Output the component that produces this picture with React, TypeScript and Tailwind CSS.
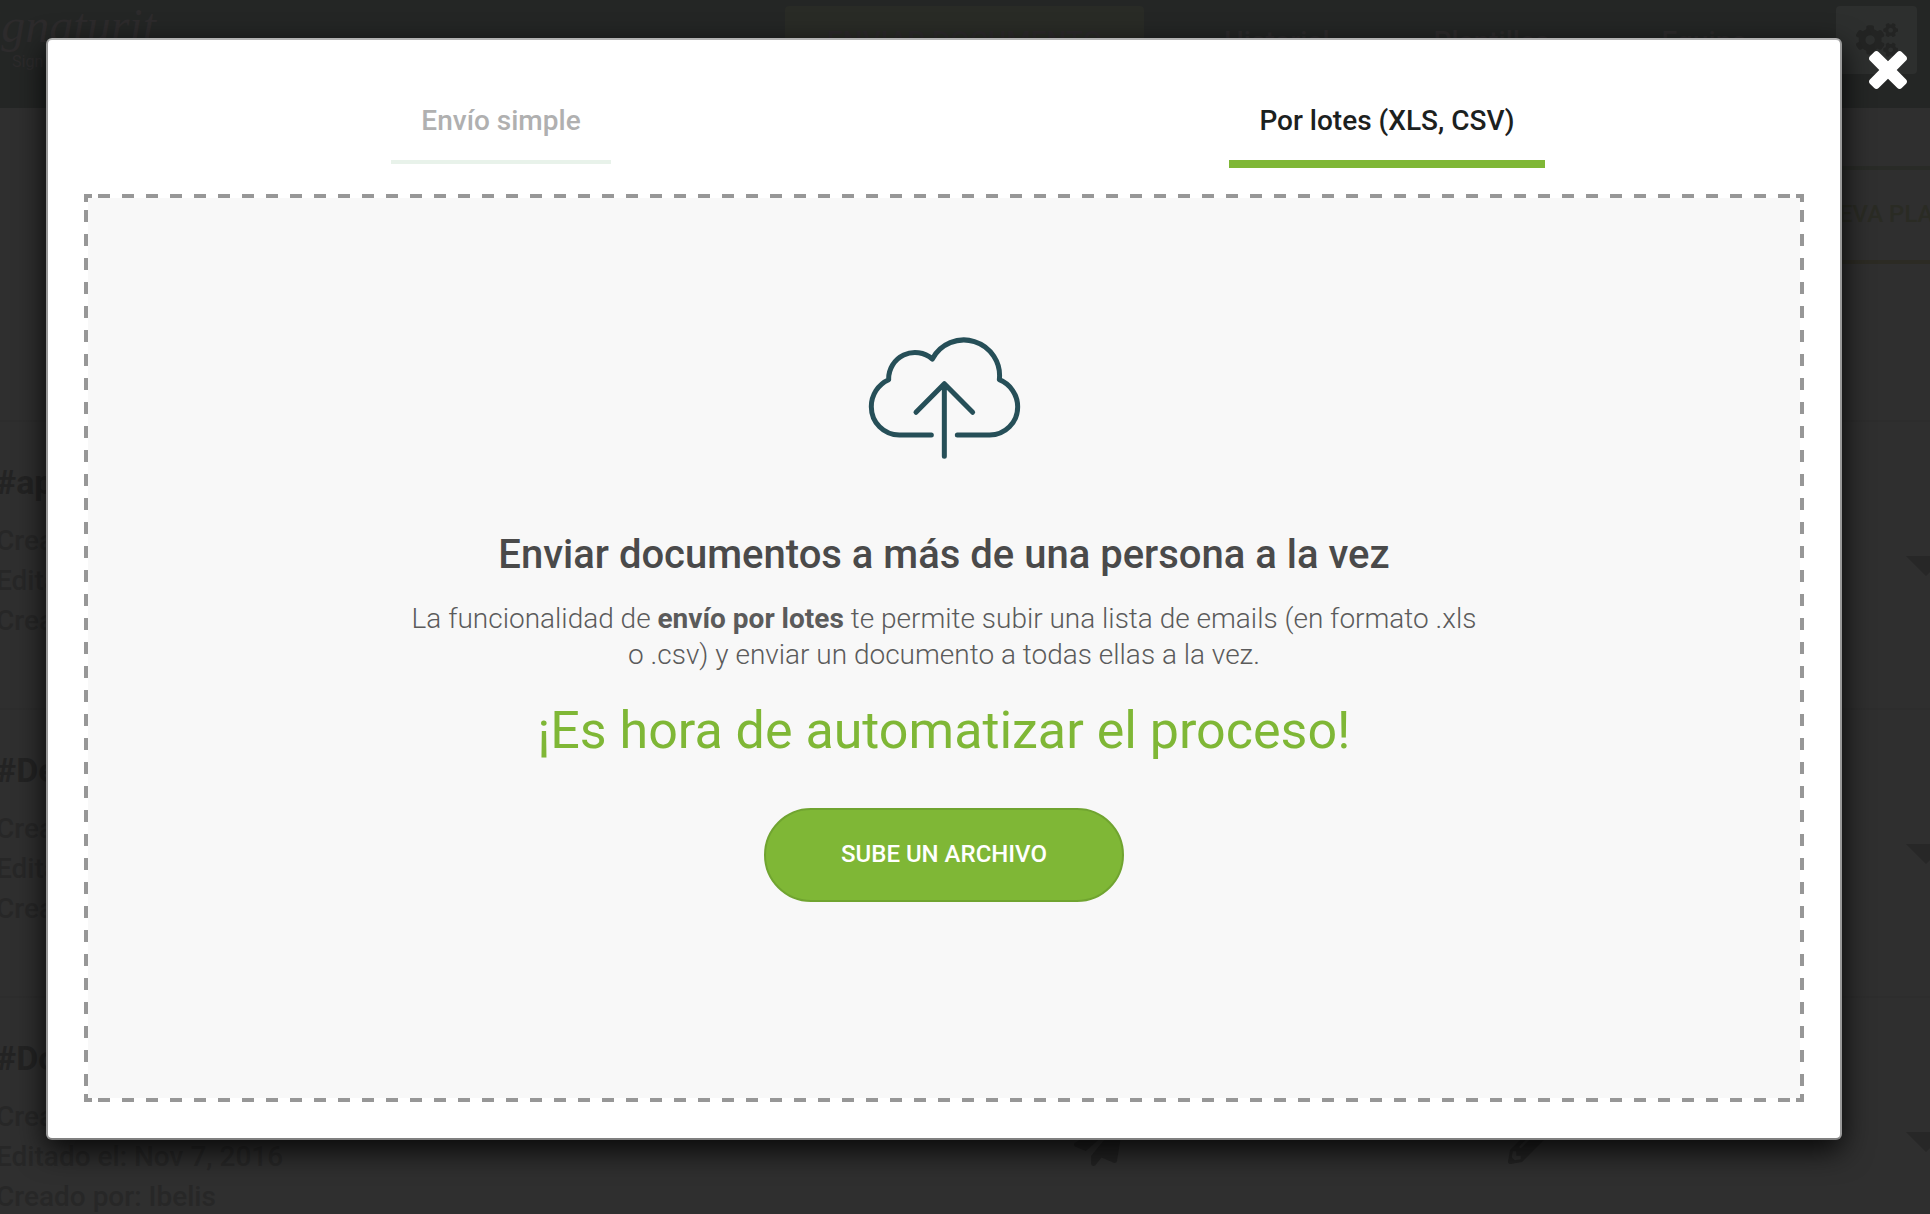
import { FaCogs, FaPaperPlane, FaPencilAlt } from "react-icons/fa";

const templates = [
  { name: "#api", created: "Nov 7, 2016", edited: "Nov 7, 2016", author: "Ibelis" },
  { name: "#Demo", created: "Nov 7, 2016", edited: "Nov 7, 2016", author: "Ibelis" },
  { name: "#Documento", created: "Nov 7, 2016", edited: "Nov 7, 2016", author: "Ibelis" },
];

function Header() {
  return (
    <header className="flex h-[108px] items-start bg-[#242625] pr-[13px] text-[#2d2b2c]">
      <div className="-ml-9 w-[821px] shrink-0">
        <p className="font-['Liberation_Serif',serif] text-[48px] leading-[52px] italic">Signaturit</p>
        <p className="pl-12 text-[16px] leading-5">Sign easily</p>
      </div>
      <nav className="flex flex-1 items-start pt-1.5 text-[28px] leading-[72px] font-medium">
        <a href="#enviar" className="w-[359px] rounded bg-[#292b26] text-center text-[#2c292b]">
          ENVIAR DOCUMENTO
        </a>
        <a href="#historial" className="ml-20">Historial</a>
        <a href="#plantillas" className="ml-26">Plantillas</a>
        <a href="#equipo" className="ml-28">Equipo</a>
      </nav>
      <button
        type="button"
        aria-label="Ajustes"
        className="mt-1.5 flex h-[68px] w-[81px] items-center justify-center rounded bg-[#2d2f2e] text-[#232423]"
      >
        <FaCogs className="size-[42px]" />
      </button>
    </header>
  );
}

function TemplateRow({ template }: { template: (typeof templates)[number] }) {
  return (
    <li className="relative flex h-72 justify-between overflow-hidden border-t-2 border-[#2d2d2d] pt-10">
      <div className="-ml-1 text-[#272727]">
        <h2 className="text-[34px] leading-10 font-bold text-[#232323]">{template.name}</h2>
        <div className="mt-[19px] text-[28px] leading-10 font-medium">
          <p>Creado el: {template.created}</p>
          <p>Editado el: {template.edited}</p>
          <p>Creado por: {template.author}</p>
        </div>
      </div>
      <div className="-mr-4 flex items-start pt-[78px] text-[#232323]">
        <FaPaperPlane className="mr-[384px] size-[50px]" />
        <FaPencilAlt className="mr-[350px] size-12" />
        <svg viewBox="0 0 40 20" className="mt-4 h-5 w-10" fill="#272727">
          <path d="M0 0h40L20 20z" />
        </svg>
      </div>
    </li>
  );
}

function CloudUpload() {
  return (
    <svg
      viewBox="84 83 456 363"
      className="h-[121px] w-[152px] overflow-visible"
      fill="none"
      stroke="#264f58"
      strokeWidth="15"
      strokeLinecap="round"
      strokeLinejoin="round"
    >
      <path d="M274 374H178A84 84 0 0 1 94 290A88 88 0 0 1 146 208A79 79 0 0 1 277 146A107 107 0 0 1 478 208A88 88 0 0 1 533 290A84 84 0 0 1 449 374H352" />
      <path d="M313 438V220M228 306L313 220L398 306" />
    </svg>
  );
}

function Dropzone() {
  return (
    <div className="mx-9 mb-9 flex flex-1 flex-col bg-[image:linear-gradient(#979797,#979797),linear-gradient(#979797,#979797),linear-gradient(#979797,#979797),linear-gradient(#979797,#979797),linear-gradient(90deg,transparent_6px,#979797_6px,#979797_18px,transparent_18px),linear-gradient(90deg,transparent_6px,#979797_6px,#979797_18px,transparent_18px),linear-gradient(transparent_6px,#979797_6px,#979797_18px,transparent_18px),linear-gradient(transparent_6px,#979797_6px,#979797_18px,transparent_18px)] [background-position:left_top,right_top,left_bottom,right_bottom,center_top,center_bottom,left_center,right_center] [background-repeat:no-repeat,no-repeat,no-repeat,no-repeat,repeat-x,repeat-x,repeat-y,repeat-y] [background-size:8px_8px,8px_8px,8px_8px,8px_8px,24px_4px,24px_4px,4px_24px,4px_24px] p-1">
      <div className="flex flex-1 flex-col items-center bg-[#f8f8f8] pt-[140px] text-center">
        <CloudUpload />
        <h1 className="mt-[72px] text-[40px] leading-12 font-medium text-[#4a4a4a]">
          Enviar documentos a más de una persona a la vez
        </h1>
        <p className="mt-[22px] max-w-[1080px] text-[28px] leading-9 font-light text-[#5b5b5b]">
          La funcionalidad de <strong className="font-bold">envío por lotes</strong> te permite subir una
          lista de emails (en formato .xls o .csv) y enviar un documento a todas ellas a la vez.
        </p>
        <p className="mt-7 text-[52px] leading-[60px] text-[#7fb736]">¡Es hora de automatizar el proceso!</p>
        <button
          type="button"
          className="mt-[47px] h-[94px] w-[360px] rounded-full border-2 border-[#70a430] bg-[#7fb736] pb-0.5 text-[24px] leading-8 font-medium text-white"
        >
          SUBE UN ARCHIVO
        </button>
      </div>
    </div>
  );
}

export default function App() {
  return (
    <div className="relative min-h-screen overflow-hidden bg-[#2f2f2f] font-[Roboto,sans-serif]">
      <div className="absolute inset-0 overflow-hidden">
        <Header />
        <div className="flex h-[312px] justify-end pt-[58px]">
          <button
            type="button"
            className="-mr-[130px] h-[98px] w-[300px] border-y-4 border-t-[#292b27] border-b-[#2c2b24] pb-0.5 text-[24px] font-medium text-[#2a2b24]"
          >
            NUEVA PLANTILLA
          </button>
        </div>
        <ul>
          {templates.map((template) => (
            <TemplateRow key={template.name} template={template} />
          ))}
        </ul>
      </div>

      <div className="relative flex min-h-screen pt-[38px] pr-[88px] pb-[74px] pl-[46px]">
        <div
          role="dialog"
          aria-modal="true"
          className="flex flex-1 flex-col rounded-md border-2 border-[#999999] border-t-[#b2b2b2] border-b-[#808080] bg-white shadow-[0_10px_30px_rgba(0,0,0,0.85)]"
        >
          <div role="tablist" className="grid h-[154px] grid-cols-2 items-start justify-items-center px-2.5 pt-[61px]">
            <button
              type="button"
              role="tab"
              aria-selected="false"
              className="border-b-4 border-[#e8f2ea] px-[30px] pb-[19px] text-[28px] leading-10 font-medium text-[#b0b0b0]"
            >
              Envío simple
            </button>
            <button
              type="button"
              role="tab"
              aria-selected="true"
              className="border-b-8 border-[#7fb736] px-[30px] pb-[19px] text-[28px] leading-10 font-medium text-[#1c211e]"
            >
              Por lotes (XLS, CSV)
            </button>
          </div>
          <Dropzone />
        </div>
        <button type="button" aria-label="Cerrar" className="absolute top-[51px] right-[23px]">
          <svg viewBox="110 366 1188 1188" className="size-[38px]" fill="#fff">
            <path d="M1298 1322q0 40-28 68l-136 136q-28 28-68 28t-68-28l-294-294-294 294q-28 28-68 28t-68-28l-136-136q-28-28-28-68t28-68l294-294-294-294q-28-28-28-68t28-68l136-136q28-28 68-28t68 28l294 294 294-294q28-28 68-28t68 28l136 136q28 28 28 68t-28 68l-294 294 294 294q28 28 28 68z" />
          </svg>
        </button>
      </div>
    </div>
  );
}
